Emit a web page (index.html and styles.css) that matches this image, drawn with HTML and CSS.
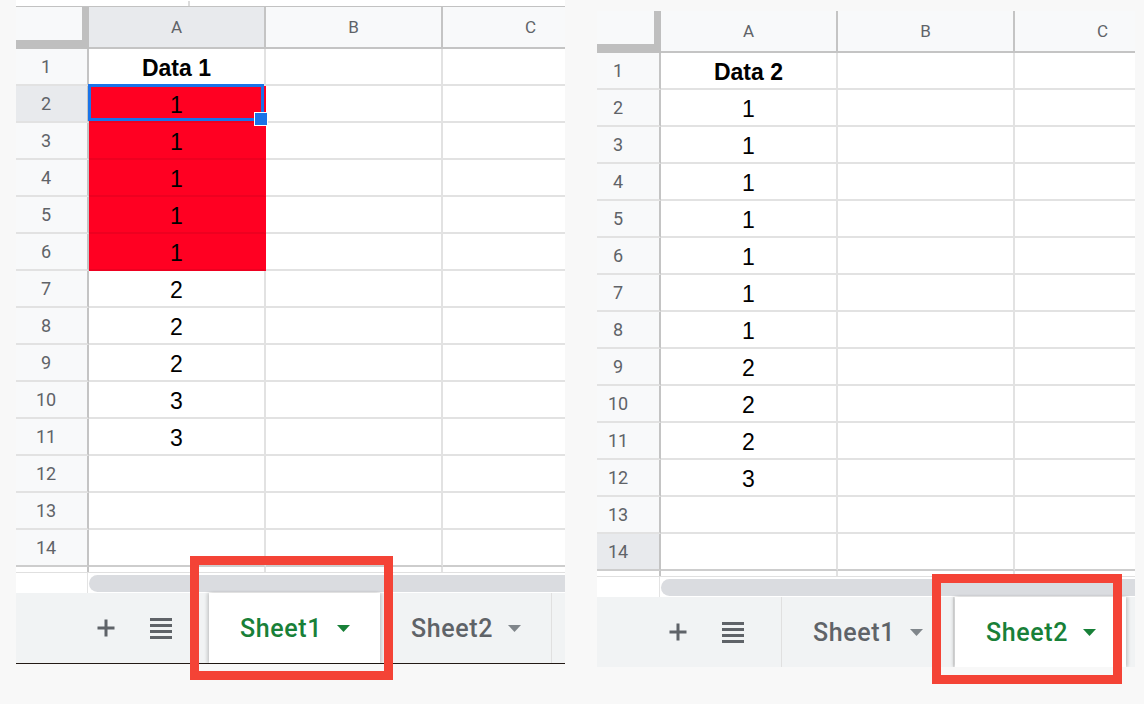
FILE: index.html
```html
<!DOCTYPE html>
<html>
<head>
<meta charset="utf-8">
<link rel="stylesheet" href="styles.css">
</head>
<body>
<div class="wrap">
  <section class="panel panel-left">
    <div class="topstrip"><span class="mark"></span></div>
    <div class="sheet">
      <div class="corner"></div><div class="ch on">A</div><div class="ch">B</div><div class="ch">C</div>
      <div class="rh">1</div><div class="c b">Data 1</div><div class="c"></div><div class="c"></div>
      <div class="rh on">2</div><div class="c red cur">1<span class="sel"><span class="handle"></span></span></div><div class="c"></div><div class="c"></div>
      <div class="rh">3</div><div class="c red">1</div><div class="c"></div><div class="c"></div>
      <div class="rh">4</div><div class="c red">1</div><div class="c"></div><div class="c"></div>
      <div class="rh">5</div><div class="c red">1</div><div class="c"></div><div class="c"></div>
      <div class="rh">6</div><div class="c red">1</div><div class="c"></div><div class="c"></div>
      <div class="rh">7</div><div class="c">2</div><div class="c"></div><div class="c"></div>
      <div class="rh">8</div><div class="c">2</div><div class="c"></div><div class="c"></div>
      <div class="rh">9</div><div class="c">2</div><div class="c"></div><div class="c"></div>
      <div class="rh">10</div><div class="c">3</div><div class="c"></div><div class="c"></div>
      <div class="rh">11</div><div class="c">3</div><div class="c"></div><div class="c"></div>
      <div class="rh">12</div><div class="c"></div><div class="c"></div><div class="c"></div>
      <div class="rh">13</div><div class="c"></div><div class="c"></div><div class="c"></div>
      <div class="rh last">14</div><div class="c last"></div><div class="c last"></div><div class="c last"></div>
    </div>
    <div class="partial"><div class="p"></div><div class="p"></div><div class="p"></div><div class="p"></div></div>
    <div class="track"><div class="track-hdr"></div><div class="thumb"></div></div>
    <div class="tabbar dark">
      <div class="btns">
        <span class="ib"><svg width="18" height="18" viewBox="0 0 18 18"><path d="M9 0.5v17M0.5 9h17" stroke="#5f6368" stroke-width="3"/></svg></span>
        <span class="ib"><svg width="22" height="21" viewBox="0 0 22 21"><path d="M0 1.5h22M0 7.5h22M0 13.5h22M0 19.5h22" stroke="#5f6368" stroke-width="3"/></svg></span>
      </div>
      <div class="tab active">Sheet1<svg class="arr" width="13" height="7" viewBox="0 0 13 7"><path d="M0 0h13L6.5 7z"/></svg></div>
      <div class="tab">Sheet2<svg class="arr" width="13" height="7" viewBox="0 0 13 7"><path d="M0 0h13L6.5 7z"/></svg></div>
    </div>
  </section>

  <section class="panel panel-right">
    <div class="sheet">
      <div class="corner"></div><div class="ch">A</div><div class="ch">B</div><div class="ch">C</div>
      <div class="rh">1</div><div class="c b">Data 2</div><div class="c"></div><div class="c"></div>
      <div class="rh">2</div><div class="c">1</div><div class="c"></div><div class="c"></div>
      <div class="rh">3</div><div class="c">1</div><div class="c"></div><div class="c"></div>
      <div class="rh">4</div><div class="c">1</div><div class="c"></div><div class="c"></div>
      <div class="rh">5</div><div class="c">1</div><div class="c"></div><div class="c"></div>
      <div class="rh">6</div><div class="c">1</div><div class="c"></div><div class="c"></div>
      <div class="rh">7</div><div class="c">1</div><div class="c"></div><div class="c"></div>
      <div class="rh">8</div><div class="c">1</div><div class="c"></div><div class="c"></div>
      <div class="rh">9</div><div class="c">2</div><div class="c"></div><div class="c"></div>
      <div class="rh">10</div><div class="c">2</div><div class="c"></div><div class="c"></div>
      <div class="rh">11</div><div class="c">2</div><div class="c"></div><div class="c"></div>
      <div class="rh">12</div><div class="c">3</div><div class="c"></div><div class="c"></div>
      <div class="rh">13</div><div class="c"></div><div class="c"></div><div class="c"></div>
      <div class="rh on last">14</div><div class="c last"></div><div class="c last"></div><div class="c last"></div>
    </div>
    <div class="partial"><div class="p"></div><div class="p"></div><div class="p"></div><div class="p"></div></div>
    <div class="track"><div class="track-hdr"></div><div class="thumb"></div></div>
    <div class="tabbar">
      <div class="btns sep">
        <span class="ib"><svg width="18" height="18" viewBox="0 0 18 18"><path d="M9 0.5v17M0.5 9h17" stroke="#5f6368" stroke-width="3"/></svg></span>
        <span class="ib"><svg width="22" height="21" viewBox="0 0 22 21"><path d="M0 1.5h22M0 7.5h22M0 13.5h22M0 19.5h22" stroke="#5f6368" stroke-width="3"/></svg></span>
      </div>
      <div class="tab">Sheet1<svg class="arr" width="13" height="7" viewBox="0 0 13 7"><path d="M0 0h13L6.5 7z"/></svg></div>
      <div class="tab active">Sheet2<svg class="arr" width="13" height="7" viewBox="0 0 13 7"><path d="M0 0h13L6.5 7z"/></svg></div>
    </div>
  </section>
</div>
<div class="anno anno-left"></div>
<div class="anno anno-right"></div>
</body>
</html>
```
FILE: styles.css
```css
* { box-sizing: border-box; }
html, body { margin: 0; padding: 0; }
body {
  width: 1144px;
  height: 704px;
  background: #f8f8f8;
  position: relative;
  overflow: hidden;
  font-family: Roboto, "Liberation Sans", sans-serif;
}
.wrap {
  display: flex;
  align-items: flex-start;
  padding-left: 16px;
  gap: 32px;
}
.panel { overflow: hidden; flex: none; }
.panel-left { width: 549px; --rh: 73px; --rhpad: 11px; }
.panel-right { width: 538px; margin-top: 11px; --rh: 64px; --rhpad: 20px; }

.topstrip {
  height: 7px;
  background: #fff;
  border-bottom: 1px solid #c2c2c2;
  display: flex;
}
.mark {
  width: 2px;
  height: 5px;
  margin: 1px 0 0 172px;
  background: #dcdcdc;
}

.sheet {
  display: grid;
  grid-template-columns: var(--rh) 177px 177px 177px;
  grid-template-rows: 42px repeat(14, 37px);
  width: calc(var(--rh) + 531px);
}
.corner {
  background: #f8f9fa;
  border-right: 7px solid #bfbfbf;
  border-bottom: 9px solid #bfbfbf;
}
.ch {
  background: #f8f9fa;
  border-right: 2px solid #c4c4c4;
  border-bottom: 2px solid #c4c4c4;
  display: flex;
  align-items: center;
  justify-content: center;
  font-size: 17px;
  color: #5f6368;
}
.ch.on, .rh.on { background: #e8eaed; }
.rh {
  background: #f8f9fa;
  border-right: 2px solid #c4c4c4;
  border-bottom: 2px solid #e2e2e2;
  display: flex;
  align-items: center;
  justify-content: center;
  padding-right: var(--rhpad);
  font-size: 18px;
  color: #5f6368;
}
.c {
  background: #fff;
  border-right: 2px solid #e2e2e2;
  border-bottom: 2px solid #e2e2e2;
  display: flex;
  align-items: flex-end;
  justify-content: center;
  padding-bottom: 2px;
  font-family: "Liberation Sans", Arial, sans-serif;
  font-size: 23px;
  color: #000;
}
.c.b { font-weight: bold; }
.rh.last, .c.last { border-bottom-color: #cdcdcd; }
.c.red {
  background: #ff0022;
  border-right-color: #ff0022;
  border-bottom-color: #ee0020;
}
.cur { position: relative; }
.sel {
  position: absolute;
  top: -2px;
  left: -1px;
  right: 0;
  bottom: 0;
  border: 3px solid #1a73e8;
}
.handle {
  position: absolute;
  right: -7px;
  bottom: -8px;
  width: 14px;
  height: 14px;
  background: #1a73e8;
  border: 1px solid #fff;
}

.partial {
  display: grid;
  grid-template-columns: var(--rh) 177px 177px 177px;
  height: 5px;
  background: #fff;
}
.p { border-right: 2px solid #e2e2e2; }
.p:first-child { border-right-color: #c4c4c4; }

.track {
  height: 21px;
  background: #fff;
  border-top: 1px solid #e0e0e0;
  display: flex;
}
.track-hdr {
  width: calc(var(--rh) - 1px);
  border-right: 1px solid #e3e3e3;
  flex: none;
}
.thumb {
  flex: 1;
  margin: 2px 0 1px 1px;
  background: #dadce0;
  border-radius: 9px 0 0 9px;
}

.tabbar {
  height: 70px;
  background: #f1f3f4;
  display: flex;
  align-items: stretch;
}
.tabbar.dark { height: 71px; border-bottom: 1px solid #231a15; }
.btns {
  flex: none;
  display: flex;
  align-items: center;
  gap: 15px;
}
.panel-left .btns { width: 193px; padding-left: 70px; }
.panel-right .btns { width: 185px; padding-left: 61px; border-right: 1px solid #e0e0e0; }
.ib {
  width: 40px;
  display: flex;
  justify-content: center;
  align-items: center;
}
.tab {
  flex: none;
  width: 172px;
  display: flex;
  align-items: center;
  padding-left: 31px;
  font-size: 25px;
  font-weight: 500;
  letter-spacing: 0.6px;
  color: #5f6368;
  border-right: 1px solid #e0e0e0;
}
.tab .arr { margin-left: 15px; fill: #80868b; }
.tab.active {
  width: 171px;
  background: #fff;
  color: #188038;
  border-right: none;
  box-shadow: -2px 0 3px rgba(0,0,0,0.16), 2px 0 3px rgba(0,0,0,0.16);
  position: relative;
}
.tab.active .arr { fill: #188038; }
.panel-right .tab.active { margin-left: 1px; }

.anno {
  position: absolute;
  border: 9px solid #f44336;
}
.anno-left { left: 190px; top: 556px; width: 203px; height: 124px; }
.anno-right { left: 932px; top: 574px; width: 190px; height: 110px; }
```
